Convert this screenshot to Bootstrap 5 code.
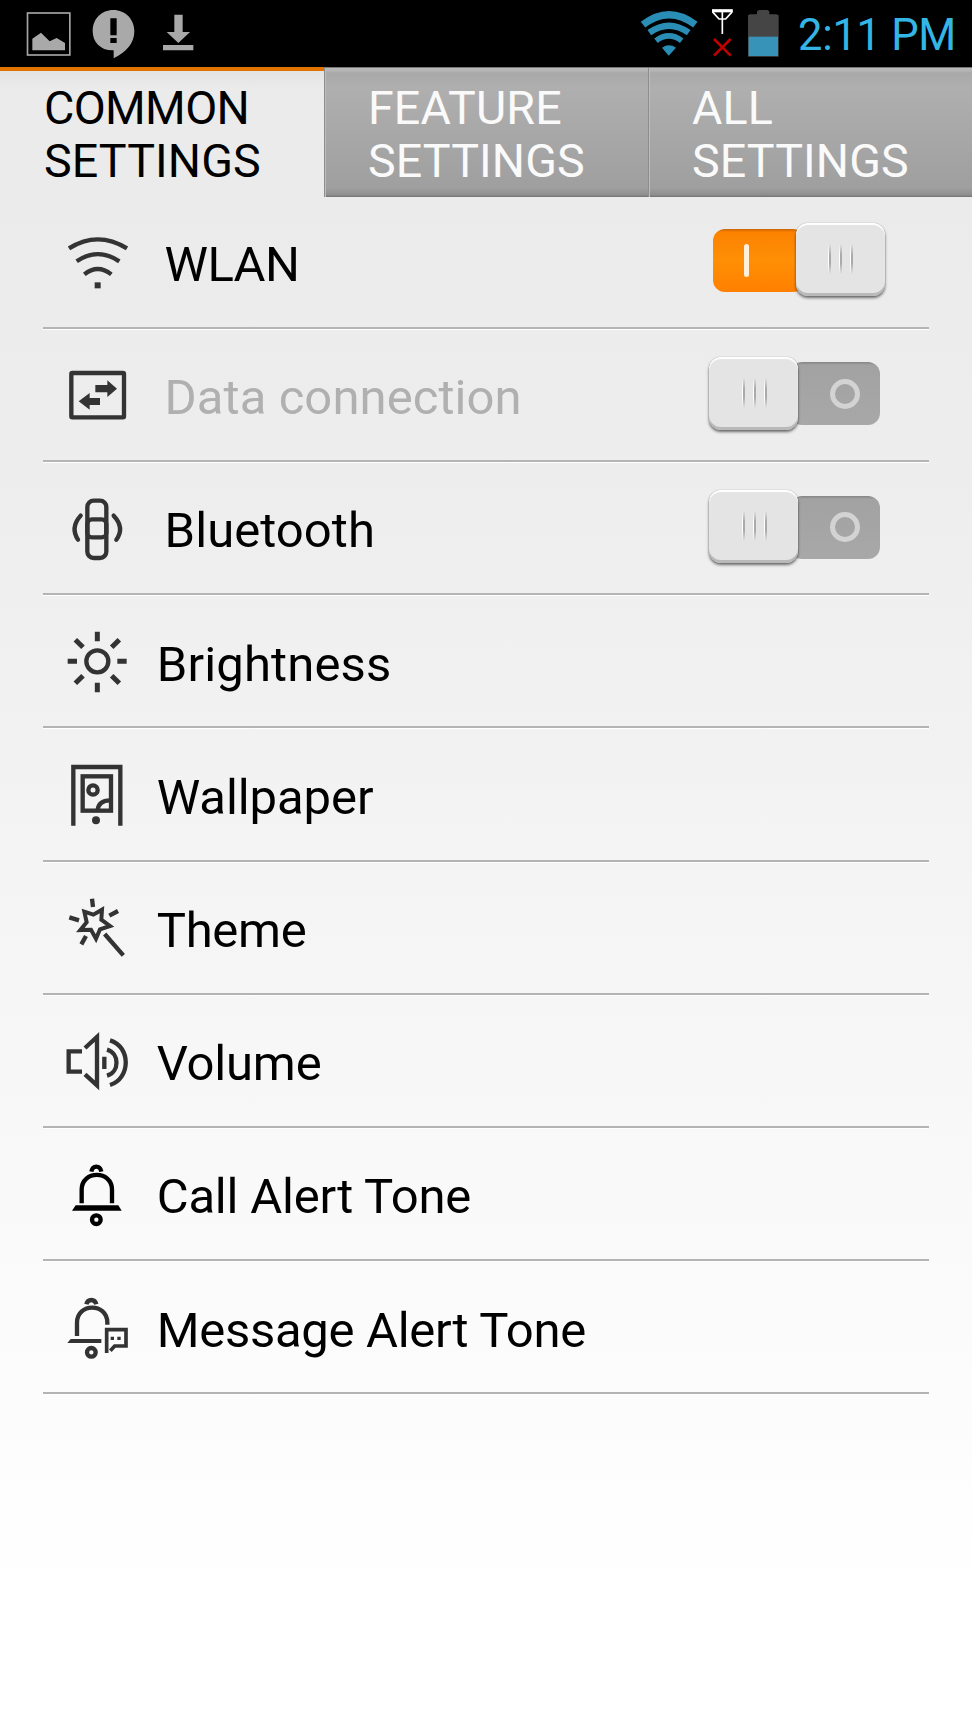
<!DOCTYPE html>
<html lang="en">
<head>
<meta charset="utf-8">
<meta name="viewport" content="width=device-width, initial-scale=1">
<title>Settings</title>
<link href="https://cdn.jsdelivr.net/npm/bootstrap@5.3.0/dist/css/bootstrap.min.css" rel="stylesheet">
<style>
body{font-family:Roboto,"Liberation Sans",sans-serif;color:#000;background:#fff}
.screen{width:972px;height:1728px;background:linear-gradient(#eaeaea 0,#ebebeb 200px,#eeeeee 520px,#f4f4f4 860px,#fafafa 1250px,#fff 1600px)}
.statusbar{height:67px;background:#000}
.statusbar svg{display:block;flex:none;height:67px}
.clock{font-size:43.5px;line-height:67px;letter-spacing:-.3px;color:#33b5e5;white-space:nowrap;margin:2px 16px 0 18px}
.tabs{height:130px}
.tabs .nav-link{width:324px;padding:14px 0 0 44px;border-radius:0;font-size:46.6px;line-height:53.3px;letter-spacing:.12px;color:#fafafa;text-align:left;border-top:1px solid #777;background:linear-gradient(#bababa 0,#b4b4b4 3px,#a9a9a9 5px,#afafaf 20px,#9f9f9f 120px,#8e8e8e 127px,#707070 129px);box-shadow:inset 1px 0 #8d8d8d,inset 2px 0 #bdbdbd}
.tabs .nav-link.active{color:#000;border-top:4px solid #e27300;padding-top:11px;background:linear-gradient(#e3e3e3,#ebebeb 18px);box-shadow:none}
.tight{letter-spacing:-.65px}
.settings{margin:-1.4px 43px 0}
.settings .item{height:133.2px;padding:0;border:0;border-bottom:2px solid #b4b4b4;box-shadow:0 1px #fff;border-radius:0;background:none;color:#000}
.item svg{flex:none;width:120px;height:120px;margin-left:-3px}
.item .title{font-size:49px;line-height:60px;margin-left:-3.3px;padding-top:7.6px;white-space:nowrap}
.item .title.wide{margin-left:4.6px}
.settings .item.off-line .title{color:#b0b0b0}
.toggle{width:180px;height:75px;margin-right:41px;flex:none;display:flex}
.is-on{margin-top:-1px}
.knob{width:89px;height:73px;border-radius:12px;background:#e4e4e4;box-shadow:inset 0 2px 1px #fff,inset 0 -3px 0 #b9b9b9,0 2px 3px rgba(0,0,0,.55),0 0 1px rgba(0,0,0,.4);position:relative;display:flex;justify-content:center;gap:8px;padding:21px 0 0 1px}
.is-on .knob{padding-left:0}
.knob i{width:3px;height:30px;background:linear-gradient(90deg,#fff 1.5px,#aaa 1.5px);-webkit-mask:linear-gradient(transparent,#000 35%,#000 65%,transparent);mask:linear-gradient(transparent,#000 35%,#000 65%,transparent)}
.track{height:63px;margin-top:5.5px;border-radius:12px;display:flex;align-items:center}
.is-on .track{width:92px;margin-left:5px;background:linear-gradient(#c96300 0,#fb8200 3px,#ff8f05 50%,#ff8000);padding-left:30.5px}
.is-on .knob{margin-left:-9px}
.is-on .track b{width:5.5px;height:33px;border-radius:3px;background:#fff0dc}
.is-off .knob{margin-left:1px}
.is-off .track{width:90px;margin-left:-8px;background:linear-gradient(#858585 0,#a2a2a2 3px,#a8a8a8);padding-left:40px}
.is-off .track b{width:30px;height:30px;border-radius:50%;border:5px solid #d3d3d3}
.ln{fill:none;stroke:#333;stroke-width:13}
.fl{fill:#333}
</style>
</head>
<body>
<main class="screen d-flex flex-column">
<header class="statusbar d-flex">
 <svg width="46" viewBox="78 0 138 201" style="margin-left:26px"><rect x="82.5" y="39" width="127" height="126" fill="none" stroke="#a4a4a4" stroke-width="5"/><path d="M97 151V116L123 98L149 124L170 114L195 129V151Z" fill="#a9a9a9"/></svg>
 <svg width="46" viewBox="270 0 138 201" style="margin-left:18px"><path d="M340 30C376 30 403 58 403 93C403 130 380 155 341 175V151C303 153 278 127 278 93C278 57 304 30 340 30Z" fill="#a9a9a9"/><path d="M331 55H350V106H331ZM331 114H350V129H331Z" fill="#000"/></svg>
 <svg width="34" viewBox="483 0 102 201" style="margin-left:25px"><path d="M523 44H548V96H570L535 129L500 96H523ZM489 135H580V151H489Z" fill="#a9a9a9"/></svg>
 <svg width="59" viewBox="60 0 177 201" class="ms-auto"><g fill="none" stroke="#2a8db5" stroke-width="22"><path d="M69 74Q147 14 226 74"/><path d="M88 98Q147 56 206 98" stroke-width="19"/><path d="M108 122Q147 93 185 122" stroke-width="17"/></g><path d="M126 143Q147 129 168 143L146 167Z" fill="#2a8db5"/></svg>
 <svg width="25" viewBox="270 0 75 201" style="margin-left:11px"><path d="M276 31H338M279 31V37L297 57H317L335 37V31M307 31V102" fill="none" stroke="#fff" stroke-width="5"/><path d="M276 28H338V37H276Z" fill="#fff"/><path d="M282 117L332 167M332 117L282 167" stroke="#c00000" stroke-width="8"/></svg>
 <svg width="34" viewBox="378 0 102 201" style="margin-left:11px"><path d="M384 46L390 43H411V34L417 30H442L448 34V43H469L476 46V170H384Z" fill="#454545"/><path d="M386 110H474V168H386Z" fill="#3893b8"/></svg>
 <span class="clock">2:11 PM</span>
</header>
<nav class="tabs nav flex-nowrap">
 <a class="nav-link active"><span class="tight">COMMON</span><br>SETTINGS</a>
 <a class="nav-link">FEATURE<br>SETTINGS</a>
 <a class="nav-link">ALL<br>SETTINGS</a>
</nav>
<div class="settings list-group">
 <div class="item list-group-item d-flex align-items-center">
  <svg viewBox="0 -28 360 360"><g class="ln"><path d="M87 114Q173 60 261 114"/><path d="M110 153Q173 110 238 153"/><path d="M133 192Q173 160 214 192"/></g><path class="fl" d="M164 216H182V234H164Z"/></svg>
  <span class="title wide tight">WLAN</span>
  <span class="toggle is-on ms-auto"><span class="track"><b></b></span><span class="knob"><i></i><i></i><i></i></span></span>
 </div>
 <div class="item off-line list-group-item d-flex align-items-center">
  <svg viewBox="0 372 360 360"><rect class="ln" x="94" y="489" width="158" height="133" rx="3"/><path class="fl" d="M166 525H202V511L231 536L202 561V547H166ZM180 564H149V549L116 574L149 599V585H180Z"/></svg>
  <span class="title wide" style="letter-spacing:.08px">Data connection</span>
  <span class="toggle is-off ms-auto"><span class="knob"><i></i><i></i><i></i></span><span class="track"><b></b></span></span>
 </div>
 <div class="item list-group-item d-flex align-items-center">
  <svg viewBox="0 -39 360 360"><g class="ln"><rect x="142" y="59" width="57" height="172" rx="19"/><rect x="142" y="115" width="57" height="54" rx="14"/><path d="M122 104Q90 140 114 176M221 104Q255 140 229 176" stroke-linecap="round"/></g></svg>
  <span class="title wide" style="letter-spacing:.05px">Bluetooth</span>
  <span class="toggle is-off ms-auto"><span class="knob"><i></i><i></i><i></i></span><span class="track"><b></b></span></span>
 </div>
 <div class="item list-group-item d-flex align-items-center">
  <svg viewBox="0 361 360 360"><g class="ln"><circle cx="172" cy="542" r="33"/><path d="M172 453V482M172 606V635M83 542H111M232 542H260M106 477L129 500M238 477L215 500M106 608L129 585M238 608L215 585" stroke-width="15"/></g></svg>
  <span class="title" style="letter-spacing:.16px">Brightness</span>
 </div>
 <div class="item list-group-item d-flex align-items-center">
  <svg viewBox="0 -20 360 360"><g class="ln"><path d="M100 255V79H241V255"/><rect x="128" y="107" width="85" height="103"/><circle cx="159" cy="148" r="14"/><path d="M173 208Q176 179 210 179"/></g><circle class="fl" cx="168" cy="239" r="12"/></svg>
  <span class="title" style="letter-spacing:-.08px">Wallpaper</span>
 </div>
 <div class="item list-group-item d-flex align-items-center">
  <svg viewBox="0 380 360 360"><g class="ln"><path d="M133 514L160 523L186 508L184 538L210 557L180 567L168 595L153 568L121 569L140 546Z" stroke-width="12"/><path d="M194 581L250 645M156 475L159 500M88 531L117 540M208 526L234 512M138 587L124 612"/></g></svg>
  <span class="title" style="letter-spacing:-.3px">Theme</span>
 </div>
 <div class="item list-group-item d-flex align-items-center">
  <svg viewBox="0 -30 360 360"><g class="ln"><path d="M126 124H86V185H126"/><path d="M135 114L171 81V226L135 193"/><path d="M193 140V177M201 119C239 130 239 186 201 197M210 91C273 110 273 205 210 225"/></g></svg>
  <span class="title" style="letter-spacing:-.2px">Volume</span>
 </div>
 <div class="item list-group-item d-flex align-items-center">
  <svg viewBox="0 369 360 360"><g class="ln" style="stroke:#000"><path d="M125 577V536C125 477 216 477 216 536V577"/><path d="M154 482Q157 467 169 467Q181 467 184 482"/><circle cx="169" cy="626" r="13"/></g><path d="M107 583H235L245 599H96Z"/></svg>
  <span class="title" style="letter-spacing:-.19px">Call Alert Tone</span>
 </div>
 <div class="item list-group-item d-flex align-items-center">
  <svg viewBox="0 -11 360 360"><g class="ln"><path d="M111 196V156C111 96 202 96 202 156V162"/><path d="M139 101Q142 88 154 88Q166 88 169 101"/><circle cx="154" cy="245" r="13"/><path d="M200 247V177H258V226H224L211 240" stroke-width="11"/></g><path class="fl" d="M92 205H184V217H82ZM212 198H222V208H212ZM232 198H242V208H232Z"/></svg>
  <span class="title" style="letter-spacing:-.29px">Message Alert Tone</span>
 </div>
</div>
</main>
<script src="https://cdn.jsdelivr.net/npm/bootstrap@5.3.0/dist/js/bootstrap.bundle.min.js"></script>
</body>
</html>
